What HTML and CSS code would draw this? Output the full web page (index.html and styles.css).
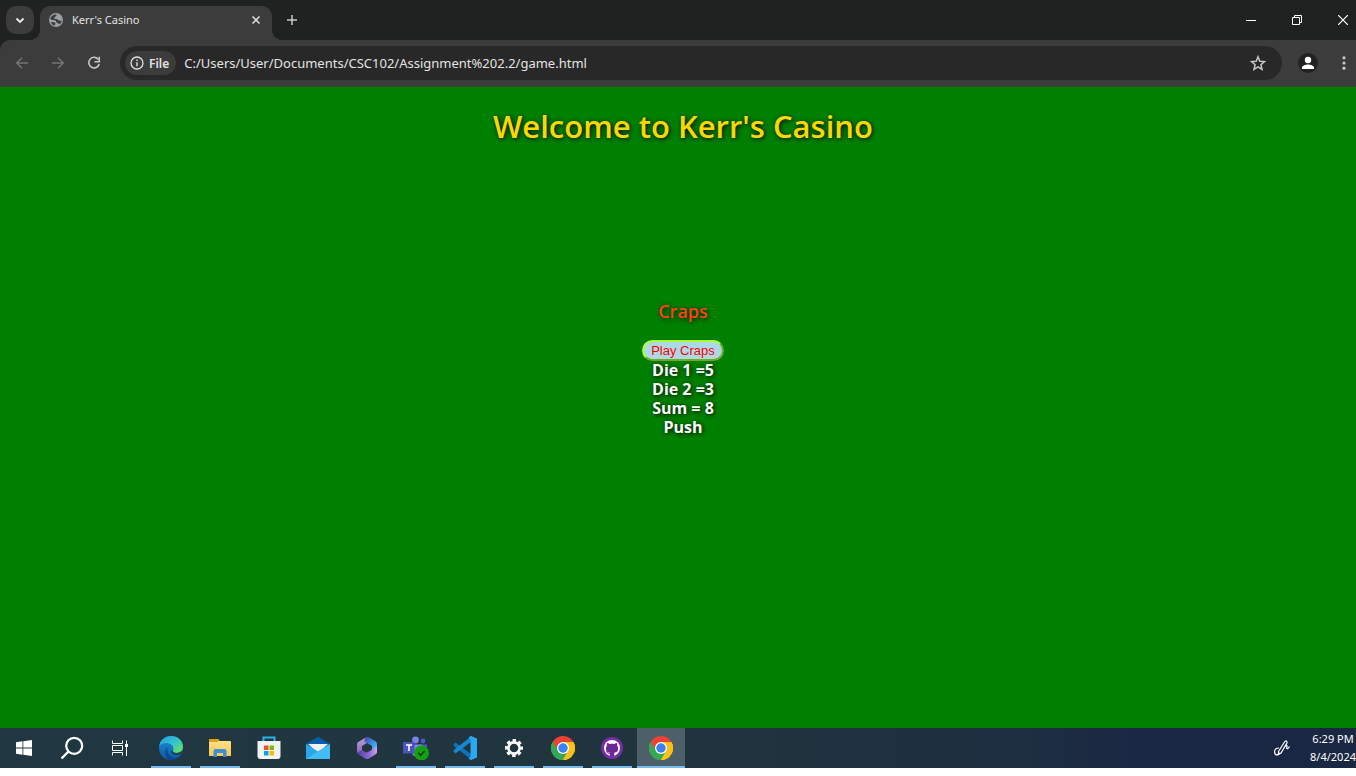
FILE: index.html
```html
<!DOCTYPE html>
<html lang="en">
<head>
<meta charset="utf-8">
<title>Kerr's Casino</title>
<link rel="stylesheet" href="styles.css">
</head>
<body>
<svg class="defs" width="0" height="0" aria-hidden="true">
  <defs>
    <linearGradient id="edge-a" x1="0" y1="0" x2="1" y2="1"><stop offset="0" stop-color="#1b9de2"/><stop offset=".5" stop-color="#35c1d0"/><stop offset="1" stop-color="#6bea4c"/></linearGradient>
    <linearGradient id="edge-b" x1="0" y1="0" x2="0" y2="1"><stop offset="0" stop-color="#1793d8"/><stop offset="1" stop-color="#0c59a4"/></linearGradient>
    <linearGradient id="folder" x1="0" y1="0" x2="0" y2="1"><stop offset="0" stop-color="#ffe08a"/><stop offset="1" stop-color="#f8ca58"/></linearGradient>
    <linearGradient id="copilot-a" x1="0" y1="0" x2="1" y2="1"><stop offset="0" stop-color="#4a3fa8"/><stop offset=".6" stop-color="#3f9be8"/><stop offset="1" stop-color="#5cc8f8"/></linearGradient>
    <linearGradient id="copilot-b" x1="0" y1="0" x2="0" y2="1"><stop offset="0" stop-color="#b9a4d8"/><stop offset="1" stop-color="#8a5fb8"/></linearGradient>
    <linearGradient id="copilot-c" x1="0" y1="0" x2="1" y2="0"><stop offset="0" stop-color="#4c3f9e"/><stop offset=".6" stop-color="#8d68d2"/><stop offset="1" stop-color="#d7a0ee"/></linearGradient>
    <symbol id="chrome" viewBox="0 0 48 48">
      <path fill="#ea4335" d="M24 24 3.200 12A24 24 0 0 1 44.800 12z"/>
      <path fill="#fbc116" d="M24 24 44.800 12A24 24 0 0 1 24 48z"/>
      <path fill="#34a853" d="M24 24 3.200 12A24 24 0 0 0 24 48z"/>
      <path fill="#ea4335" d="M3.200 12 14 30 24 12z"/>
      <path fill="#34a853" d="M3.200 12 13.600 30 24 36 34.400 30 24 48A24 24 0 0 1 3.200 12z"/>
      <path fill="#fbc116" d="M24 12H44.800A24 24 0 0 1 24 48L34.400 30z"/>
      <circle cx="24" cy="24" r="12" fill="#fff"/><circle cx="24" cy="24" r="9.500" fill="#3b82ee"/>
    </symbol>
  </defs>
</svg>

<header class="tabstrip">
  <button class="tab-search" aria-label="Search tabs"><svg width="12" height="12" viewBox="0 0 12 12"><path d="M2.500 4.500 6 8l3.500-3.500" fill="none" stroke="#e8eaed" stroke-width="1.800"/></svg></button>
  <div class="tab">
    <svg class="favicon" width="16" height="16" viewBox="0 0 16 16"><circle cx="8" cy="8" r="7" fill="#9aa0a6"/><path d="M5.500 3c2-.8 3.500-.3 3 .8-.4 1-2 .8-2.200 1.900-.2 1 .8 1.300 2 1.400 1.600.2 1.700 1.400 3 1.300 1-.1 1.700.4 2.500.2-.2 1.500-1 2.900-2.200 3.700-.8-.2-.9-1.100-1.900-1.300-1.300-.2-1.600-1-1.700-1.900C7.800 8 6 8.400 4.700 8.100 3.500 7.900 3 7.300 2.300 7c.3-1.700 1.600-3.300 3.200-4zM5 10c1 .3 2.400.3 2.500 1.500.1 1-.8 1.200-.8 2.200C5 13.200 3.500 12 3 10.300z" fill="#3c3c3c"/></svg>
    <span class="tab-title">Kerr's Casino</span>
    <button class="icon-btn tab-close" aria-label="Close tab"><svg width="10" height="10" viewBox="0 0 10 10"><path d="m1.500 1.500 7 7m0-7-7 7" stroke="#e3e3e3" stroke-width="1.500"/></svg></button>
  </div>
  <button class="icon-btn new-tab" aria-label="New tab"><svg width="12" height="12" viewBox="0 0 12 12"><path d="M6 1v10M1 6h10" stroke="#c7c7c7" stroke-width="1.500"/></svg></button>
  <div class="window-controls">
    <button class="icon-btn" aria-label="Minimize"><svg width="10" height="10" viewBox="0 0 10 10"><path d="M0 5.500h10" stroke="#fff"/></svg></button>
    <button class="icon-btn" aria-label="Restore"><svg width="10" height="10" viewBox="0 0 10 10"><path d="M.5 2.500h7v7h-7zM2.500 2.500v-2h7v7h-2" fill="none" stroke="#fff"/></svg></button>
    <button class="icon-btn win-close" aria-label="Close"><svg width="10" height="10" viewBox="0 0 10 10"><path d="m0 0 10 10M10 0 0 10" stroke="#fff" stroke-width="1.200"/></svg></button>
  </div>
</header>

<div class="toolbar-wrap">
<nav class="toolbar" aria-label="Browser toolbar">
  <button class="icon-btn nav-btn" aria-label="Back"><svg width="14" height="14" viewBox="0 0 14 14"><path d="M13 7H2M7 1.700 1.700 7 7 12.300" fill="none" stroke="#757575" stroke-width="1.500"/></svg></button>
  <button class="icon-btn nav-btn" aria-label="Forward"><svg width="14" height="14" viewBox="0 0 14 14"><path d="M1 7h11M7 1.700 12.300 7 7 12.300" fill="none" stroke="#757575" stroke-width="1.500"/></svg></button>
  <button class="icon-btn nav-btn" aria-label="Reload"><svg width="14" height="14" viewBox="0 0 14 14"><path d="M11.500 3.700A5.300 5.300 0 1 0 12.200 8" fill="none" stroke="#c7c7c7" stroke-width="1.600"/><path d="M12.300.8v5H7.500" fill="none" stroke="#c7c7c7" stroke-width="1.500"/></svg></button>
  <div class="omnibox">
    <button class="chip"><svg width="14" height="14" viewBox="0 0 14 14"><circle cx="7" cy="7" r="6" fill="none" stroke="#e0e0e0" stroke-width="1.300"/><path d="M7 6.200v4M7 3.500v1.500" stroke="#e0e0e0" stroke-width="1.400"/></svg>File</button>
    <input class="url" type="text" aria-label="Address" value="C:/Users/User/Documents/CSC102/Assignment%202.2/game.html">
    <button class="icon-btn star" aria-label="Bookmark this page"><svg width="16" height="16" viewBox="0 0 16 16"><path d="m8 1.800 1.800 4.400 4.700.4-3.600 3.100 1.100 4.600L8 11.800l-4 2.500 1.100-4.600L1.500 6.600l4.700-.4z" fill="none" stroke="#c7c7c7" stroke-width="1.500"/></svg></button>
  </div>
  <button class="icon-btn profile" aria-label="Profile"><svg width="20" height="20" viewBox="0 0 20 20"><circle cx="10" cy="10" r="10" fill="#202222"/><circle cx="10" cy="7" r="3.200" fill="#fff"/><path d="M4 16v-1.500c0-2 3.500-3 6-3s6 1 6 3V16z" fill="#fff"/></svg></button>
  <button class="icon-btn menu" aria-label="Menu"><svg width="4" height="14" viewBox="0 0 4 14"><g fill="#c7c7c7"><circle cx="2" cy="1.800" r="1.600"/><circle cx="2" cy="7" r="1.600"/><circle cx="2" cy="12.200" r="1.600"/></g></svg></button>
</nav>
</div>

<main class="page">
  <h1 class="welcome">Welcome to Kerr's Casino</h1>
  <section class="craps">
    <h2 class="game-title">Craps</h2>
    <button class="play">Play Craps</button>
    <div class="result">Die 1 =5</div>
    <div class="result">Die 2 =3</div>
    <div class="result">Sum = 8</div>
    <div class="result">Push</div>
  </section>
</main>

<footer class="taskbar">
  <button class="task" aria-label="Start"><svg width="16" height="16" viewBox="0 0 16 16"><path fill="#fff" d="M0 2.200 6.500 1.300v6.200H0zM7.300 1.200 16 0v7.500H7.300zM0 8.400h6.500v6.300L0 13.800zM7.300 8.400H16V16l-8.700-1.200z"/></svg></button>
  <button class="task" aria-label="Search"><svg width="24" height="24" viewBox="0 0 24 24"><circle cx="14.200" cy="9.800" r="8" fill="none" stroke="#fff" stroke-width="2.200"/><path d="M8.500 15.500 1.500 22.500" stroke="#fff" stroke-width="2.400"/></svg></button>
  <button class="task" aria-label="Task view"><svg width="16" height="16" viewBox="0 0 16 16"><path d="M.5.500v3h10v-3M.5 15.500v-3h10v3M.5 5.500h10v5H.5zM14.500.500V16" fill="none" stroke="#fff"/><path d="M13 4h3v3h-3z" fill="#fff"/></svg></button>
  <div class="apps">
    <button class="task open" aria-label="Edge"><svg width="24" height="24" viewBox="0 0 24 24"><circle cx="12" cy="12" r="12" fill="url(#edge-b)"/><path d="M.3 10C1 4.200 6 0 12 0c7 0 12 5 12 10.500 0 4.200-3 6.500-6.500 6.500-2.700 0-4-1.200-3.500-2.300.8-1.300.7-4-1.300-5.700C9 6 3.500 6.500.3 10z" fill="url(#edge-a)"/><path d="M8.500 11c-1 4.500 1.500 9 5.500 10.500 3 1 6.500-.5 8.300-3.200A12 12 0 0 1 10 23.800C5.500 21 4.800 14.500 8.500 11z" fill="#103f88" opacity=".75"/><path d="M14 14.700c-.5 1.100.8 2.300 3.500 2.300 2 0 4-.8 5.200-2.200.5 1 .3 2-.4 3.200-3.500 2-9 1.200-10.500-2.500z" fill="#203d4b"/></svg></button>
    <button class="task open" aria-label="File Explorer"><svg width="22" height="20" viewBox="0 0 22 20"><path d="M0 1.500Q0 1 1 1h8l1.500 2H21q1 0 1 1v14H0z" fill="url(#folder)"/><path d="M0 1.500Q0 1 1 1h8l1 1.200L8.500 4H0z" fill="#e4a00c"/><path d="M4.500 19v-6q0-2 2-2h9q2 0 2 2v6H14v-4H8v4z" fill="#3b8ed8"/></svg></button>
    <button class="task" aria-label="Microsoft Store"><svg width="24" height="24" viewBox="0 0 24 24"><path d="M6.500 6V1.500h11V6" fill="none" stroke="#27b4e6" stroke-width="2"/><path d="M.5 5h23v15q0 3-3 3h-17q-3 0-3-3z" fill="#f2f3f5"/><path d="M7 9.500h4.500V14H7z" fill="#f25022"/><path d="M12.500 9.500H17V14h-4.500z" fill="#7fba00"/><path d="M7 15h4.500v4.500H7z" fill="#00a4ef"/><path d="M12.500 15H17v4.500h-4.500z" fill="#ffb900"/></svg></button>
    <button class="task" aria-label="Mail"><svg width="24" height="24" viewBox="0 0 24 24"><path d="M0 8 12 .8 24 8v6H0z" fill="#0a5cad"/><path d="M2 8h20l-10 9z" fill="#f0f2f4"/><path d="M0 8l12 7.500L24 8v15H0z" fill="#28a8ea"/><path d="M0 23 24 8v15z" fill="#42bdf5"/></svg></button>
    <button class="task" aria-label="Microsoft 365"><svg width="22" height="24" viewBox="0 0 22 24"><path d="M10 1.500 2.500 5.800Q1 6.700 1 8.300v7.500q0 1.500 1.500 2.300L6 16V10l5-3z" fill="url(#copilot-b)"/><path d="M9.500 1.500q1.500-1 3-.2l7 4q1.500 1 1.500 2.500v8.500l-5-2.500V10L8 5.500z" fill="url(#copilot-a)"/><path d="M1.500 16.500 6 14l4 2.500 11-6v5.800q0 1.200-1.300 2l-7.200 4.400q-1.500.8-3 0L2.500 18.500z" fill="url(#copilot-c)"/><path d="m11 7.500 4.500 2.500v4L11 16.500 7 14v-4z" fill="#213640"/></svg></button>
    <button class="task open" aria-label="Teams"><svg width="26" height="24" viewBox="0 0 26 24"><circle cx="12.500" cy="4" r="3.400" fill="#7b83eb"/><circle cx="20" cy="5" r="2.400" fill="#5059c9"/><path d="M15 8.500h9v6q-2 4-6 3z" fill="#5059c9"/><path d="M7 8.500h12v8q-3 6-9 3z" fill="#7b83eb"/><path d="M0 6h11.500v11.500H0z" fill="#4b53bc"/><path d="M3 9h6M6 9v6" stroke="#fff" stroke-width="1.600"/><circle cx="18.500" cy="17" r="7.500" fill="#13a10e"/><path d="m15.300 17 2.300 2.300 4-4.300" fill="none" stroke="#10351c" stroke-width="1.500"/></svg></button>
    <button class="task open" aria-label="Visual Studio Code"><svg width="24" height="24" viewBox="0 0 24 24"><path d="M.5 8.500 2.500 6.500 18 18v5.500L.8 10z" fill="#0f73b8"/><path d="M.5 15.500 2.500 17.500 18 6V.5L.8 14z" fill="#1688ce"/><path d="M18 0 24 2.500v19L18 24l-2-1.500 2-1V2.500l-2-1z" fill="#2aa9f0"/><path d="M18 0h.5v24H18l-2.500-1.500 2-1.500V3l-2-1.500z" fill="#2aa9f0"/></svg></button>
    <button class="task open" aria-label="Settings"><svg width="20" height="20" viewBox="0 0 20 20"><circle cx="10" cy="10" r="7.500" fill="none" stroke="#fff" stroke-width="3" stroke-dasharray="3.400 2.490" stroke-dashoffset="1.700"/><circle cx="10" cy="10" r="5.600" fill="none" stroke="#fff" stroke-width="2.600"/></svg></button>
    <button class="task open" aria-label="Chrome"><svg width="24" height="24"><use href="#chrome"/></svg></button>
    <button class="task open" aria-label="GitHub Desktop"><svg width="22" height="22" viewBox="0 0 22 22"><circle cx="11" cy="11" r="11" fill="#7a2da8"/><circle cx="11" cy="11" r="8" fill="#fff"/><path d="M8.800 19v-3.200c-2.800-.4-3.900-1.800-3.900-4.300 0-1.200.4-2 1-2.700-.3-.9-.2-2 .1-2.800 1 0 1.900.5 2.700 1.100 1.500-.4 3.100-.4 4.600 0 .8-.6 1.700-1.100 2.700-1.100.3.800.4 1.900.1 2.800.6.700 1 1.500 1 2.700 0 2.500-1.100 3.900-3.900 4.300V19z" fill="#6b2796"/><path d="M5.200 14.500c1.200.3 1.200 2.200 3.600 2" fill="none" stroke="#6b2796"/></svg></button>
    <button class="task open active" aria-label="Chrome, Kerr's Casino"><svg width="24" height="24"><use href="#chrome"/></svg></button>
  </div>
  <div class="tray">
    <button class="icon-btn" aria-label="Windows Ink Workspace"><svg width="16" height="16" viewBox="0 0 16 16"><path d="m4.500 11.500 6-9.500q1-1.500 2-.8t.2 2.200L7 13l-2.500 1.500zM5 8Q.8 8 .6 11.500q-.2 3 2 3.300 2.500 0 3.400-2M10 8l1.500-2q1.500-1.500 1.600.2l-.4 2q.8 1.500 2.800-1.700" fill="none" stroke="#fff" stroke-width="1.200"/></svg></button>
    <div class="clock"><time>6:29 PM</time><time datetime="2024-08-04">8/4/2024</time></div>
  </div>
</footer>
</body>
</html>
```
FILE: styles.css
```css
* { box-sizing: border-box; }
body {
  display: flex;
  flex-direction: column;
  min-height: 100vh;
  margin: 0;
  padding-bottom: 8px;
  background: #fff;
  font-family: "Noto Sans", "Open Sans", sans-serif;
  overflow: hidden;
}
button { margin: 0; padding: 0; border: 0; font: inherit; color: inherit; background: none; }
svg { display: block; flex: none; }
.defs { position: absolute; }
.icon-btn { display: flex; align-items: center; justify-content: center; }

.tabstrip {
  display: flex;
  align-items: stretch;
  height: 40px;
  padding: 6px 0 0 6px;
  background: #202222;
}
.tab-search {
  display: flex;
  align-items: center;
  justify-content: center;
  width: 28px;
  height: 28px;
  border-radius: 10px;
  background: #3c3c3c;
}
.tab {
  position: relative;
  display: flex;
  align-items: center;
  gap: 8px;
  width: 232px;
  margin-left: 6px;
  padding: 0 8px 6px;
  border-radius: 10px 10px 0 0;
  background: #3c3c3c;
}
.tab::before,
.tab::after {
  content: "";
  position: absolute;
  bottom: 0;
  width: 10px;
  height: 10px;
}
.tab::before { left: -10px; background: radial-gradient(circle at 0 0, transparent 10px, #3c3c3c 10px); }
.tab::after { right: -10px; background: radial-gradient(circle at 100% 0, transparent 10px, #3c3c3c 10px); }
.tab-title { flex: 1; color: #e3e3e3; font-size: 11px; line-height: 16px; }
.tab-close { width: 16px; height: 16px; }
.new-tab { width: 28px; height: 28px; margin-left: 6px; }
.window-controls { display: flex; height: 28px; margin-left: auto; }
.window-controls .icon-btn { width: 46px; }
.window-controls .win-close { width: 36px; padding-left: 10px; }

.toolbar-wrap { background: #202222; }
.toolbar {
  display: flex;
  align-items: center;
  height: 47px;
  padding: 0 0 1px 4px;
  border-radius: 10px 0 0 0;
  background: #3c3c3c;
}
.nav-btn { width: 36px; height: 36px; }
.omnibox {
  display: flex;
  flex: 1;
  align-items: center;
  height: 34px;
  margin-left: 8px;
  padding: 0 14px 0 5px;
  border-radius: 17px;
  background: #282828;
}
.chip {
  display: flex;
  align-items: center;
  gap: 5px;
  height: 24px;
  padding: 0 7px 0 5px;
  border-radius: 12px;
  background: #3c3c3c;
  color: #e3e3e3;
  font-size: 12px;
  font-weight: 600;
}
.url {
  flex: 1;
  min-width: 0;
  margin-left: 8px;
  padding: 0;
  border: 0;
  outline: 0;
  background: none;
  color: #e3e3e3;
  font: 13px/20px "Noto Sans", "Open Sans", sans-serif;
}
.star { width: 20px; height: 20px; }
.profile { width: 28px; height: 28px; margin-left: 12px; }
.menu { width: 20px; height: 28px; margin: 0 2px 0 12px; }

.page {
  flex: 1;
  padding: 19px 0 20px 10px;
  background: #008000;
  text-align: center;
  font-family: "Open Sans", "Noto Sans", sans-serif;
  text-shadow: 1px 1px 5px #000;
}
.welcome { margin: 0; color: #ffd700; font-size: 31px; font-weight: 600; line-height: 40px; }
.craps { display: flex; flex-direction: column; align-items: center; margin-top: 152px; }
.game-title { margin: 0 0 16px; color: #ff4500; font-size: 18px; font-weight: 600; line-height: 26px; }
.play {
  height: 21px;
  padding: 0 7px;
  border: 2px outset #adff2f;
  border-radius: 20px;
  background: #add8e6;
  color: #f00;
  font: 13px/16px "Liberation Sans", Arial, sans-serif;
  text-shadow: none;
}
.result { color: #fff; font-size: 16px; font-weight: 700; line-height: 19px; }

.taskbar {
  display: flex;
  height: 40px;
  background: linear-gradient(90deg, #203741, #20343e 50%, #1d2f40 75%, #1a2745 85%, #1a2743);
}
.task {
  display: flex;
  align-items: center;
  justify-content: center;
  width: 48px;
  height: 40px;
}
.apps { display: flex; gap: 1px; margin-left: 3px; }
.open {
  background: linear-gradient(#76b9ed, #76b9ed) center bottom / 40px 2px no-repeat;
}
.active { background-color: #4d5f68; background-size: 48px 2px; }
.tray { display: flex; align-items: center; gap: 20px; margin-left: auto; }
.clock {
  display: flex;
  flex-direction: column;
  align-items: center;
  color: #fff;
  font-size: 11px;
  line-height: 18px;
}
```
